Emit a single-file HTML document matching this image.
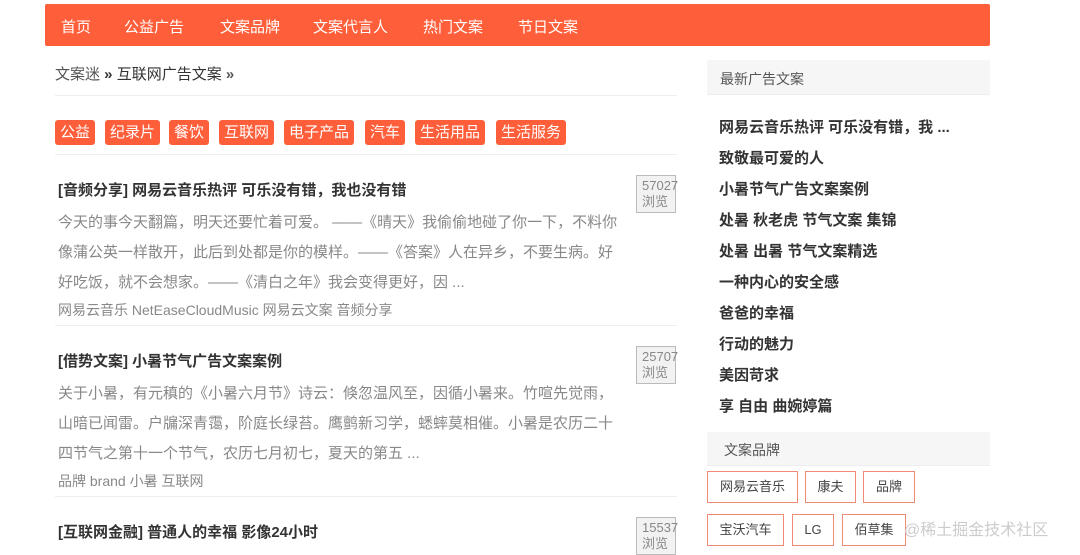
<!DOCTYPE html><html><head><meta charset="utf-8"><style>
*{margin:0;padding:0;box-sizing:border-box}
body{width:1080px;height:555px;overflow:hidden;background:#fff;font-family:"Liberation Sans","Noto Sans CJK SC",sans-serif;position:relative;color:#333}
.a{position:absolute;white-space:nowrap}
.nav{left:45px;top:4px;width:945px;height:42px;background:#ff5e3a;border-radius:2px}
.nav span{position:absolute;top:12px;color:#fff;font-size:15px}
.tag{top:120px;height:25px;background:#ff5e3a;color:#fff;font-size:15px;line-height:25px;padding:0 5px;border-radius:3px}
.hr{height:1px;background:#eee}
.t{font-size:15px;font-weight:bold;color:#333}
.p{font-size:15px;color:#888}
.m{font-size:14px;color:#888}
.v{left:636px;width:40px;height:38px;border:1px solid #bbb;background:#f2f2f2;color:#888;font-size:13px;line-height:16px;padding:2px 0 0 5px;overflow:visible}
.s{left:719px;font-size:15px;font-weight:bold;color:#333}
.b{height:32px;border:1px solid #ef8a75;font-size:13px;line-height:30px;text-align:center;color:#444}
</style></head><body>
<div class="a nav"><span style="left:16px">首页</span><span style="left:79px">公益广告</span><span style="left:175px">文案品牌</span><span style="left:268px">文案代言人</span><span style="left:378px">热门文案</span><span style="left:473px">节日文案</span></div>
<div class="a" style="left:55px;top:63px;font-size:15px;color:#555">文案迷 <b style="color:#333">»</b> <span style="color:#333">互联网广告文案</span> <b>»</b></div>
<div class="a hr" style="left:55px;top:95px;width:622px"></div>
<div class="a tag" style="left:55px">公益</div>
<div class="a tag" style="left:105px">纪录片</div>
<div class="a tag" style="left:169px">餐饮</div>
<div class="a tag" style="left:219px">互联网</div>
<div class="a tag" style="left:284px">电子产品</div>
<div class="a tag" style="left:365px">汽车</div>
<div class="a tag" style="left:415px">生活用品</div>
<div class="a tag" style="left:496px">生活服务</div>
<div class="a hr" style="left:55px;top:154px;width:622px"></div>
<div class="a t" style="left:58px;top:179px">[音频分享] 网易云音乐热评 可乐没有错，我也没有错</div>
<div class="a v" style="top:175px">57027<br>浏览</div>
<div class="a p" style="left:58px;top:211px">今天的事今天翻篇，明天还要忙着可爱。 ——《晴天》我偷偷地碰了你一下，不料你</div>
<div class="a p" style="left:58px;top:241px">像蒲公英一样散开，此后到处都是你的模样。——《答案》人在异乡，不要生病。好</div>
<div class="a p" style="left:58px;top:271px">好吃饭，就不会想家。——《清白之年》我会变得更好，因 ...</div>
<div class="a m" style="left:58px;top:300px">网易云音乐 NetEaseCloudMusic 网易云文案 音频分享</div>
<div class="a hr" style="left:55px;top:325px;width:622px"></div>
<div class="a t" style="left:58px;top:350px">[借势文案] 小暑节气广告文案案例</div>
<div class="a v" style="top:346px">25707<br>浏览</div>
<div class="a p" style="left:58px;top:382px">关于小暑，有元稹的《小暑六月节》诗云：倏忽温风至，因循小暑来。竹喧先觉雨，</div>
<div class="a p" style="left:58px;top:412px">山暗已闻雷。户牖深青霭，阶庭长绿苔。鹰鹯新习学，蟋蟀莫相催。小暑是农历二十</div>
<div class="a p" style="left:58px;top:442px">四节气之第十一个节气，农历七月初七，夏天的第五 ...</div>
<div class="a m" style="left:58px;top:471px">品牌 brand 小暑 互联网</div>
<div class="a hr" style="left:55px;top:496px;width:622px"></div>
<div class="a t" style="left:58px;top:521px">[互联网金融] 普通人的幸福 影像24小时</div>
<div class="a v" style="top:517px">15537<br>浏览</div>
<div class="a" style="left:707px;top:60px;width:283px;height:35px;background:#f6f6f6;border-bottom:1px solid #eee;font-size:14px;color:#555;padding:9px 13px">最新广告文案</div>
<div class="a s" style="top:116px">网易云音乐热评 可乐没有错，我 ...</div>
<div class="a s" style="top:147px">致敬最可爱的人</div>
<div class="a s" style="top:178px">小暑节气广告文案案例</div>
<div class="a s" style="top:209px">处暑 秋老虎 节气文案 集锦</div>
<div class="a s" style="top:240px">处暑 出暑 节气文案精选</div>
<div class="a s" style="top:271px">一种内心的安全感</div>
<div class="a s" style="top:302px">爸爸的幸福</div>
<div class="a s" style="top:333px">行动的魅力</div>
<div class="a s" style="top:364px">美因苛求</div>
<div class="a s" style="top:395px">享 自由 曲婉婷篇</div>
<div class="a" style="left:707px;top:432px;width:283px;height:34px;background:#f6f6f6;border-bottom:1px solid #eee;font-size:14px;color:#555;padding:8px 17px">文案品牌</div>
<div class="a b" style="left:707px;top:471px;width:91px">网易云音乐</div>
<div class="a b" style="left:805px;top:471px;width:51px">康夫</div>
<div class="a b" style="left:863px;top:471px;width:52px">品牌</div>
<div class="a b" style="left:707px;top:514px;width:77px">宝沃汽车</div>
<div class="a b" style="left:792px;top:514px;width:42px">LG</div>
<div class="a b" style="left:842px;top:514px;width:64px">佰草集</div>
<div class="a" style="left:904px;top:516px;font-size:16px;color:#ccc">@稀土掘金技术社区</div>
</body></html>
